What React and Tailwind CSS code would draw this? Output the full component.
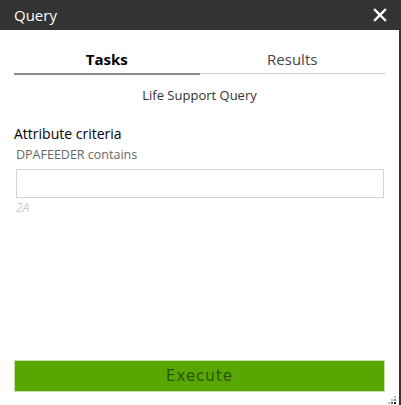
export default function App() {
  return (
    <div className="relative w-[401px] h-[405px] bg-white flex flex-col border-r-2 border-[#333] font-['Open_Sans',sans-serif] overflow-hidden">
      {/* Header */}
      <div className="h-[30px] bg-[#333333] flex items-center justify-between pl-[14px] pr-[12px] shrink-0">
        <span className="text-white text-[15px]">Query</span>
        <svg width="14" height="14" viewBox="0 0 14 14">
          <path d="M2 2 L12 12 M12 2 L2 12" stroke="#fff" strokeWidth="2.4" strokeLinecap="square" />
        </svg>
      </div>
      {/* Tabs */}
      <div className="flex mx-[14px] mt-[18px]">
        <div className="flex-1 text-center text-[15px] font-bold text-black pb-[2px] border-b-2 border-[#8a8a8a]">Tasks</div>
        <div className="flex-1 text-center text-[15px] text-[#444] pb-[2px] border-b border-[#cfcfcf] mb-[1px]">Results</div>
      </div>
      <div className="text-center text-[13px] text-[#333] mt-[11px]">Life Support Query</div>
      <div className="pl-[14px] mt-[18px] text-[14px] text-black">Attribute criteria</div>
      <div className="pl-[16px] mt-[2px] text-[12.5px] text-[#666]">DPAFEEDER contains</div>
      <div className="ml-[16px] mr-[15px] mt-[4px] h-[29px] border border-[#d4d4d4]"></div>
      <div className="pl-[16px] mt-[1px] text-[12px] italic text-[#ccc]">2A</div>
      <div className="flex-1"></div>
      <div className="mx-[14px] mb-[13px] h-[32px] bg-[#58a700] border border-[#c4dfa8] flex items-center justify-center">
        <span className="font-['DejaVu_Sans',sans-serif] text-[15px] tracking-[1px] text-[#2a5505]">Execute</span>
      </div>
      {/* Resize grip */}
      <div className="absolute right-[3px] bottom-[1px] grid grid-cols-3 gap-[1px]">
        <span className="w-[2px] h-[2px]"></span>
        <span className="w-[2px] h-[2px]"></span>
        <span className="w-[2px] h-[2px] bg-[#bbb]"></span>
        <span className="w-[2px] h-[2px]"></span>
        <span className="w-[2px] h-[2px] bg-[#bbb]"></span>
        <span className="w-[2px] h-[2px] bg-[#888]"></span>
        <span className="w-[2px] h-[2px] bg-[#bbb]"></span>
        <span className="w-[2px] h-[2px] bg-[#666]"></span>
        <span className="w-[2px] h-[2px] bg-[#222]"></span>
      </div>
    </div>
  );
}
